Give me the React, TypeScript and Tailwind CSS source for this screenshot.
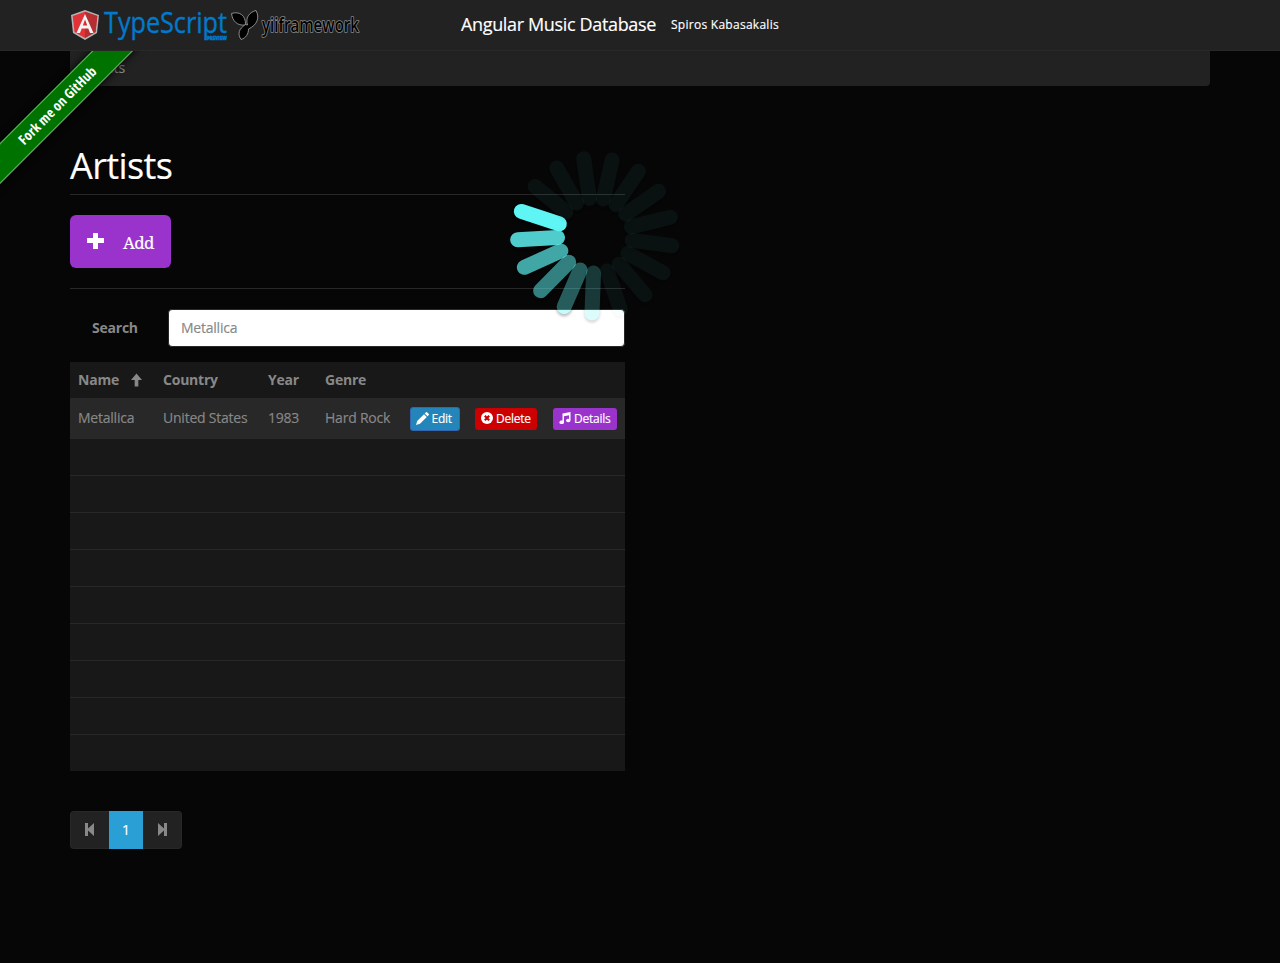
import React from "react";

const BAR_OPACITY = [1, 0.83, 0.67, 0.51, 0.36, 0.21, 0.045, 0.045, 0.045, 0.045, 0.045, 0.045, 0.045, 0.045, 0.045, 0.045, 0.045];

function Spinner() {
  return (
    <svg className="pointer-events-none absolute left-[495px] top-[136px] z-20" width="200" height="200" viewBox="-100 -99.500 200 200">
      {BAR_OPACITY.map((o, i) => (
        <g key={i} opacity={o} style={{ filter: "drop-shadow(0 2px 1.5px rgba(0,0,0,.8))" }}>
          <rect x="30" y="-7.5" width="55" height="15" rx="7.5" fill="#5ff5f5" transform={`rotate(${198.1 - i * 21.176})`} />
        </g>
      ))}
    </svg>
  );
}

function Logos() {
  return (
    <svg className="mt-[5px] block overflow-visible" width="292" height="40" viewBox="70 5 292 40">
      <path d="M85 10 L99 15 L97 33 L85 40 L73 33 L71 15Z" fill="#b3b3b3" />
      <path d="M85 11.700 L97.300 16 L95.500 32.100 L85 38 L74.500 32.100 L72.700 16Z" fill="#e23237" />
      <path d="M85 11.700 L97.300 16 L95.500 32.100 L85 38Z" fill="#b52e31" />
      <path fillRule="evenodd" d="M85 14 L93.500 33 H90 L88.300 28.500 H81.700 L80 33 H76.500Z M85 19.500 L82.800 25.500 H87.200Z" fill="#f4f4f4" />
      <text x="104" y="33" letterSpacing="0" textLength="123" lengthAdjust="spacingAndGlyphs" fontFamily="Open Sans, sans-serif" fontSize="30" fill="#007acc" stroke="#007acc" strokeWidth="0.400">TypeScript</text>
      <text x="207" y="40" letterSpacing="0" textLength="20" lengthAdjust="spacingAndGlyphs" fontFamily="Open Sans, sans-serif" fontSize="5" fontWeight="800" fill="#007acc" stroke="#007acc" strokeWidth="0.500">PREVIEW</text>
      <g fill="#000" stroke="#999" strokeWidth="0.900">
        <path d="M245.500 25 C237 26 232.500 21 231.500 13.500 C239 11 246 15 245.500 25Z" />
        <path d="M247.500 25 C245 17 250 12 256 10.500 C260 18 257 25 248.500 29 C248.500 34 246 38 241 39.500 C237.500 34 238.500 29 245.500 24.500Z" />
      </g>
      <text x="262" y="32" letterSpacing="0" textLength="97" lengthAdjust="spacingAndGlyphs" fontFamily="Open Sans, sans-serif" fontSize="19" fontWeight="600" fill="#000" stroke="#888" strokeWidth="1.700" strokeLinejoin="round" paintOrder="stroke">yiiframework</text>
    </svg>
  );
}

const Plus = () => (
  <svg className="mb-[2px]" width="17" height="16" viewBox="0 0 17 16" fill="#fff"><path d="M6 0h5v5h6v5h-6v6H6v-6H0V5h6z" /></svg>
);
const ArrowUp = () => (
  <svg className="mb-px ml-[12px]" width="11" height="14" viewBox="0 0 12 14" fill="#888"><path d="M6 0 12 7H8v7H4V7H0z" /></svg>
);
const Pencil = () => (
  <svg className="mb-[2px]" width="13" height="13" viewBox="0 0 13 13" fill="#fff"><path d="M0 13 1.200 9 8 2.200 10.800 5 4 11.800zM8.700 1.500 10 .2q.5-.4 1 0l1.800 1.800q.4.500 0 1L11.500 4.300z" /></svg>
);
const Remove = () => (
  <svg className="mb-[2px]" width="12" height="12" viewBox="0 0 12 12"><circle cx="6" cy="6" r="6" fill="#fff" /><path d="m3.800 3.800 4.400 4.400m0-4.400-4.400 4.400" stroke="#c00" strokeWidth="2.200" /></svg>
);
const Music = () => (
  <svg className="mb-[2px]" width="12" height="12" viewBox="0 0 12 12" fill="#fff"><path d="M3.500 1.600 11.500 0v8.500a2.200 1.700 0 1 1-1.500-1.600V3.200L5 4.200v6a2.300 1.800 0 1 1-1.500-1.600z" /></svg>
);

function Cell({ className, children }: { className: string; children?: React.ReactNode }) {
  return <div className={className}>{children}</div>;
}

export default function App() {
  return (
    <div className="relative h-[963px] w-[1280px] overflow-hidden bg-[#060606] font-['Open_Sans',sans-serif] text-[14px] leading-5 tracking-[-0.230px] text-[#888] [-webkit-text-stroke-width:0.150px]">
      <nav className="relative z-10 flex h-[51px] border-b border-[#282828] bg-[#222] pl-[70px]">
        <Logos />
        <div className="ml-[99px] w-[210px] whitespace-nowrap pt-[14px] text-[18px] tracking-[-0.350px] text-white">Angular Music Database</div>
        <div className="whitespace-nowrap pt-[14.500px] text-[12px] tracking-[0.270px] text-white">Spiros Kabasakalis</div>
      </nav>
      <div className="absolute left-0 top-[51px] z-[5] h-[150px] w-[150px] overflow-hidden">
        <div className="absolute left-[-43.500px] top-[40.500px] flex h-[29px] w-[200px] -rotate-45 items-center justify-center border-y border-[#66b266] bg-[#007200] pb-px pl-[2px] text-[14px] font-bold tracking-[0.200px] text-white shadow-[0_0_8px_#000] [font-stretch:80%] [-webkit-text-stroke-width:0]">Fork me on GitHub</div>
      </div>
      <main className="px-[70px]">
        <div className="h-[35px] rounded-b bg-[#222] pl-[15px] pt-[7px]">Artists</div>
        <section className="w-[555px]">
          <h1 className="mt-[59px] h-[50px] border-b border-[#282828] text-[36px] leading-[41px] tracking-[-0.600px] text-white">Artists</h1>
          <button className="mt-[20px] flex h-[53px] w-[101px] items-center rounded-[6px] bg-[#93c] pl-[17px] text-white">
            <Plus />
            <span className="ml-[19px] mt-[3px] font-['Noto_Serif','Liberation_Serif',serif] text-[17px] tracking-[-0.500px]">Add</span>
          </button>
          <div className="mt-[20px] border-b border-[#282828]" />
          <div className="mt-[20px] flex h-[38px] items-center">
            <label className="w-[98px] pl-[22px] font-bold [-webkit-text-stroke-width:0]">Search</label>
            <div className="flex h-[38px] flex-1 items-center rounded-[4px] border border-[#282828] bg-white pl-[12px]">Metallica</div>
          </div>
          <div className="mt-[15px] bg-[#181818]">
            <div className="flex h-[36px] items-center pl-[8px] font-bold [-webkit-text-stroke-width:0]">
              <Cell className="flex w-[85px] items-center">Name<ArrowUp /></Cell>
              <Cell className="w-[105px]">Country</Cell>
              <Cell className="w-[57px]">Year</Cell>
              <Cell className="w-[85px]">Genre</Cell>
            </div>
            <div className="flex h-[40px] items-center bg-[#282828] pl-[8px]">
              <Cell className="w-[85px]">Metallica</Cell>
              <Cell className="w-[105px]">United States</Cell>
              <Cell className="w-[57px]">1983</Cell>
              <Cell className="w-[85px]">Hard Rock</Cell>
              <div className="mt-[2px] flex items-center text-[12px] text-white">
                <button className="flex h-[24px] w-[50px] items-center gap-[2.500px] rounded-[3px] border border-[#3366b0] bg-[#2385ba] pl-[5px]"><Pencil />Edit</button>
                <button className="ml-[15px] flex h-[22px] w-[62px] items-center gap-[3px] rounded-[3px] bg-[#c00] pl-[6px]"><Remove />Delete</button>
                <button className="ml-[16px] flex h-[22px] w-[64px] items-center gap-[3px] rounded-[3px] bg-[#93c] pl-[6px]"><Music />Details</button>
              </div>
            </div>
            {Array.from({ length: 9 }, (_, i) => <div key={i} className="h-[37px] border-t border-[#282828]" />)}
          </div>
          <div className="mt-[40px] flex h-[38px] w-[112px] items-center">
            <div className="flex h-[38px] w-[39px] items-center justify-center rounded-l-[4px] border border-r-0 border-[#282828] bg-[#222] pr-[2px]"><svg className="mb-px" width="9" height="13" viewBox="0 0 9 13" fill="#888"><path d="M0 0h3v5.500L9 0v13L3 7.500V13H0z" /></svg></div>
            <div className="flex h-[38px] w-[34px] items-center justify-center bg-[#2a9fd6] text-white">1</div>
            <div className="flex h-[38px] w-[39px] items-center justify-center rounded-r-[4px] border border-l-0 border-[#282828] bg-[#222]"><svg className="mb-px" width="9" height="13" viewBox="0 0 9 13" fill="#888"><path d="M9 0H6v5.500L0 0v13l6-5.500V13h3z" /></svg></div>
          </div>
        </section>
      </main>
      <Spinner />
    </div>
  );
}
